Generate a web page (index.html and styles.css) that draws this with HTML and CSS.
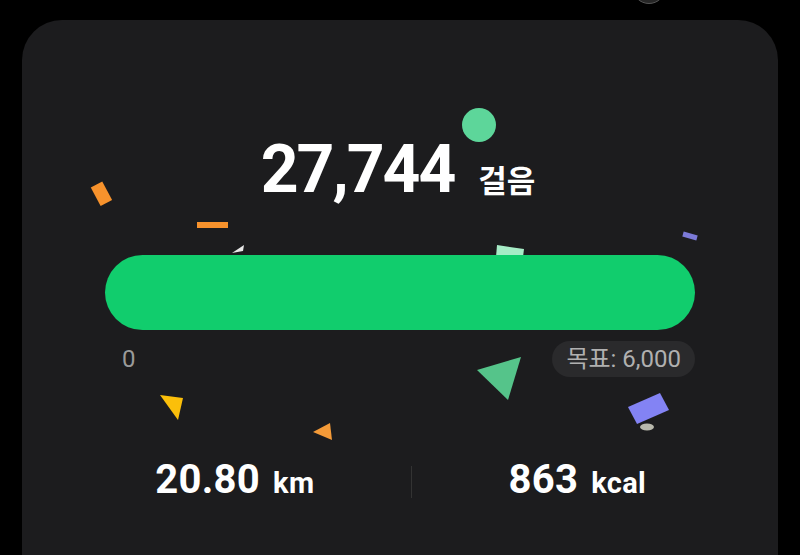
FILE: index.html
```html
<!DOCTYPE html>
<html lang="ko">
<head>
    <meta charset="UTF-8">
    <meta name="viewport" content="width=device-width, initial-scale=1.0">
    <title>걸음 수</title>
    <link rel="stylesheet" href="styles.css">
</head>
<body>

    <!-- top of the circle peeking in from above -->
    <div class="peek"></div>

    <!-- Steps card -->
    <div class="card">
        <svg class="confetti" viewBox="0 0 756 600" width="756" height="600">
            <g transform="translate(-22,-20)">
                <circle cx="479" cy="125" r="17" fill="#5dd69a"/>
                <rect x="95" y="183.5" width="13" height="21" fill="#f7922c" transform="rotate(-28 101 194)"/>
                <rect x="197" y="222" width="31" height="6" fill="#f7922c"/>
                <polygon points="232,253 244,245 243,251" fill="#e8e8e8"/>
                <polygon points="497,245 524,249 523,257 496,257" fill="#a6ecc6"/>
                <line x1="683" y1="234" x2="697" y2="238" stroke="#7c7ad8" stroke-width="5"/>
                <polygon points="160,395 183,398 178,420" fill="#fbbf0a"/>
                <polygon points="313,432 330,423 332,440" fill="#f49a38"/>
                <polygon points="477,370 521,357 508,400" fill="#55c48a"/>
                <polygon points="628,407 660,393 669,410 637,424" fill="#8383f4"/>
                <ellipse cx="647" cy="427" rx="7" ry="3.5" fill="#b9b9ad"/>
            </g>
        </svg>

        <div class="steps">
            <span class="steps-count">27,744</span>
            <span class="steps-unit">걸음</span>
        </div>

        <div class="bar"></div>

        <div class="scale">
            <span class="scale-start">0</span>
            <span class="goal">목표: 6,000</span>
        </div>

        <div class="stats">
            <div class="stat">20.80<small>km</small></div>
            <div class="divider"></div>
            <div class="stat">863<small>kcal</small></div>
        </div>
    </div>

</body>
</html>
```

FILE: styles.css
```css
body {
    margin: 0;
    background-color: #000;
    font-family: Roboto, "Noto Sans CJK KR", sans-serif;
    color: #fff;
    height: 555px;
    overflow: hidden;
    position: relative;
}

.peek {
    position: absolute;
    left: 632px;
    top: -30px;
    width: 32px;
    height: 32px;
    border-radius: 50%;
    background-color: #262626;
    border: 1px solid #555;
}

.card {
    position: relative;
    margin: 20px 22px 0;
    height: 600px;
    padding: 117px 83px 0;
    box-sizing: border-box;
    background-color: #1c1c1e;
    border-radius: 40px;
}

.confetti {
    position: absolute;
    left: 0;
    top: 0;
    z-index: 2;
    pointer-events: none;
}

.steps {
    display: flex;
    justify-content: center;
    align-items: baseline;
    gap: 24px;
    margin-left: -4px;
}

.steps-count {
    font-size: 66px;
    font-weight: 700;
    line-height: 66px;
    letter-spacing: -2px;
}

.steps-unit {
    font-family: "Noto Sans CJK KR", sans-serif;
    font-size: 31px;
    font-weight: 700;
    line-height: 31px;
}

.bar {
    position: relative;
    z-index: 3;
    height: 75px;
    margin-top: 52px;
    border-radius: 38px;
    background-color: #11cd6d;
}

.scale {
    display: flex;
    justify-content: space-between;
    align-items: center;
    margin-top: 11px;
    padding-left: 17px;
}

.scale-start {
    font-size: 24px;
    color: #9a9a9a;
}

.goal {
    height: 36px;
    line-height: 36px;
    padding: 0 14px;
    border-radius: 18px;
    background-color: #2a2a2c;
    color: #b0b0b0;
    font-size: 24px;
}

.stats {
    display: flex;
    align-items: center;
    margin: 83px -53px 0 -41px;
}

.stat {
    flex: 1;
    text-align: center;
    font-size: 40px;
    font-weight: 700;
    line-height: 40px;
    letter-spacing: 0.3px;
}

.stat small {
    font-size: 29px;
    font-weight: 700;
    margin-left: 13px;
}

.divider {
    width: 1px;
    height: 32px;
    margin: 0 -5px 0 5px;
    background-color: #333;
}
```
